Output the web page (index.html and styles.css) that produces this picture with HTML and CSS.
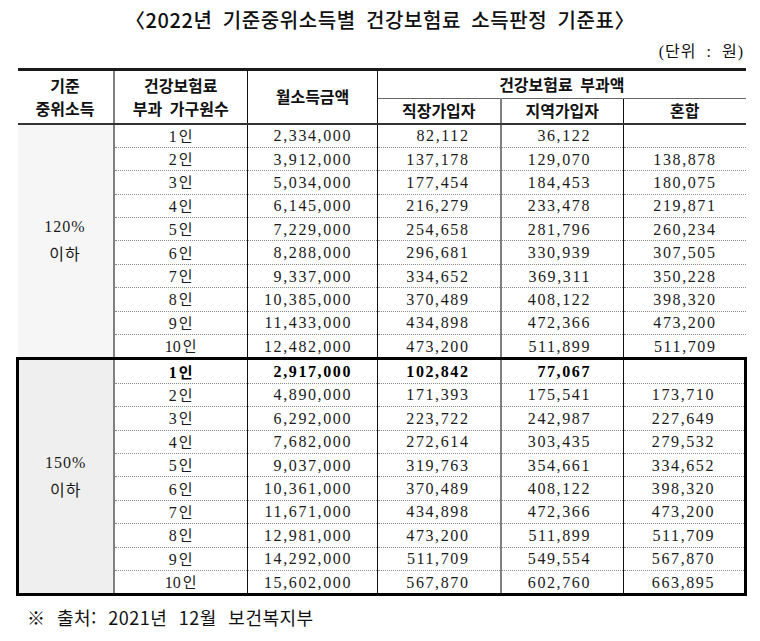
FILE: index.html
```html
<!DOCTYPE html>
<html lang="ko">
<head>
<meta charset="utf-8">
<title>2022년 기준중위소득별 건강보험료 소득판정 기준표</title>
<link rel="stylesheet" href="styles.css">
</head>
<body>
<div class="page">
  <h1 class="title">〈2022년 기준중위소득별 건강보험료 소득판정 기준표〉</h1>
  <div class="unit">(단위 : 원)</div>
  <table class="grid">
    <colgroup>
      <col class="w1"><col class="w2"><col class="w3"><col class="w4"><col class="w5"><col class="w6">
    </colgroup>
    <thead>
      <tr class="h1">
        <th rowspan="2" class="c1">기준<br>중위소득</th>
        <th rowspan="2" class="c2">건강보험료<br>부과 가구원수</th>
        <th rowspan="2" class="c3">월소득금액</th>
        <th colspan="3" class="span">건강보험료 부과액</th>
      </tr>
      <tr class="h2">
        <th class="c4">직장가입자</th>
        <th class="c5">지역가입자</th>
        <th class="c6">혼합</th>
      </tr>
    </thead>
    <tbody class="g1">
      <tr><td rowspan="10" class="c1 grp">120%<br>이하</td><td class="c2 n">1<span class="k">인</span></td><td class="c3 num">2,334,000</td><td class="c4 num">82,112</td><td class="c5 num">36,122</td><td class="c6 num"></td></tr>
      <tr><td class="c2 n">2<span class="k">인</span></td><td class="c3 num">3,912,000</td><td class="c4 num">137,178</td><td class="c5 num">129,070</td><td class="c6 num">138,878</td></tr>
      <tr><td class="c2 n">3<span class="k">인</span></td><td class="c3 num">5,034,000</td><td class="c4 num">177,454</td><td class="c5 num">184,453</td><td class="c6 num">180,075</td></tr>
      <tr><td class="c2 n">4<span class="k">인</span></td><td class="c3 num">6,145,000</td><td class="c4 num">216,279</td><td class="c5 num">233,478</td><td class="c6 num">219,871</td></tr>
      <tr><td class="c2 n">5<span class="k">인</span></td><td class="c3 num">7,229,000</td><td class="c4 num">254,658</td><td class="c5 num">281,796</td><td class="c6 num">260,234</td></tr>
      <tr><td class="c2 n">6<span class="k">인</span></td><td class="c3 num">8,288,000</td><td class="c4 num">296,681</td><td class="c5 num">330,939</td><td class="c6 num">307,505</td></tr>
      <tr><td class="c2 n">7<span class="k">인</span></td><td class="c3 num">9,337,000</td><td class="c4 num">334,652</td><td class="c5 num">369,311</td><td class="c6 num">350,228</td></tr>
      <tr><td class="c2 n">8<span class="k">인</span></td><td class="c3 num">10,385,000</td><td class="c4 num">370,489</td><td class="c5 num">408,122</td><td class="c6 num">398,320</td></tr>
      <tr><td class="c2 n">9<span class="k">인</span></td><td class="c3 num">11,433,000</td><td class="c4 num">434,898</td><td class="c5 num">472,366</td><td class="c6 num">473,200</td></tr>
      <tr class="last"><td class="c2 n">10<span class="k">인</span></td><td class="c3 num">12,482,000</td><td class="c4 num">473,200</td><td class="c5 num">511,899</td><td class="c6 num">511,709</td></tr>
    </tbody>
    <tbody class="g2">
      <tr class="bold"><td rowspan="10" class="c1 grp">150%<br>이하</td><td class="c2 n">1<span class="k">인</span></td><td class="c3 num">2,917,000</td><td class="c4 num">102,842</td><td class="c5 num">77,067</td><td class="c6 num"></td></tr>
      <tr><td class="c2 n">2<span class="k">인</span></td><td class="c3 num">4,890,000</td><td class="c4 num">171,393</td><td class="c5 num">175,541</td><td class="c6 num">173,710</td></tr>
      <tr><td class="c2 n">3<span class="k">인</span></td><td class="c3 num">6,292,000</td><td class="c4 num">223,722</td><td class="c5 num">242,987</td><td class="c6 num">227,649</td></tr>
      <tr><td class="c2 n">4<span class="k">인</span></td><td class="c3 num">7,682,000</td><td class="c4 num">272,614</td><td class="c5 num">303,435</td><td class="c6 num">279,532</td></tr>
      <tr><td class="c2 n">5<span class="k">인</span></td><td class="c3 num">9,037,000</td><td class="c4 num">319,763</td><td class="c5 num">354,661</td><td class="c6 num">334,652</td></tr>
      <tr><td class="c2 n">6<span class="k">인</span></td><td class="c3 num">10,361,000</td><td class="c4 num">370,489</td><td class="c5 num">408,122</td><td class="c6 num">398,320</td></tr>
      <tr><td class="c2 n">7<span class="k">인</span></td><td class="c3 num">11,671,000</td><td class="c4 num">434,898</td><td class="c5 num">472,366</td><td class="c6 num">473,200</td></tr>
      <tr><td class="c2 n">8<span class="k">인</span></td><td class="c3 num">12,981,000</td><td class="c4 num">473,200</td><td class="c5 num">511,899</td><td class="c6 num">511,709</td></tr>
      <tr><td class="c2 n">9<span class="k">인</span></td><td class="c3 num">14,292,000</td><td class="c4 num">511,709</td><td class="c5 num">549,554</td><td class="c6 num">567,870</td></tr>
      <tr class="last"><td class="c2 n">10<span class="k">인</span></td><td class="c3 num">15,602,000</td><td class="c4 num">567,870</td><td class="c5 num">602,760</td><td class="c6 num">663,895</td></tr>
    </tbody>
  </table>
  <p class="source">※ 출처: 2021년 12월 보건복지부</p>
</div>
</body>
</html>
```

FILE: styles.css
```css
html, body {
  margin: 0;
  padding: 0;
  background: #fff;
}

.page {
  width: 760px;
  padding-top: 6px;
  color: #111;
}

.title {
  margin: 0;
  text-align: center;
  font-family: "Noto Sans CJK KR", "Noto Sans", sans-serif;
  font-weight: 500;
  font-size: 20px;
  line-height: 28px;
  letter-spacing: 0.6px;
  word-spacing: 4px;
  color: #111;
}

.unit {
  margin: 6px 16px 0 0;
  text-align: right;
  font-family: "Liberation Serif", "Noto Sans CJK KR", serif;
  font-size: 16px;
  line-height: 24px;
  height: 28px;
  letter-spacing: 1px;
  word-spacing: 5px;
}

.grid {
  margin-left: 16px;
  width: 728px;
  table-layout: fixed;
  border-collapse: collapse;
  font-family: "Liberation Serif", "Noto Sans CJK KR", serif;
  font-size: 16px;
}

.w1 { width: 96px; }
.w2 { width: 134px; }
.w3 { width: 130px; }
.w4 { width: 123px; }
.w5 { width: 123px; }
.w6 { width: 122px; }

.grid th {
  font-family: "Noto Sans CJK KR", "Noto Sans", sans-serif;
  font-weight: 700;
  font-size: 16px;
  line-height: 23px;
  padding: 0;
  color: #111;
  border-top: 3px solid #1a1a1a;
  border-bottom: 2px solid #333;
  text-align: center;
  word-spacing: 3px;
}

.grid .h1 { height: 29px; }
.grid .h2 { height: 25px; }

.grid .h1 .span {
  border-bottom: 1px solid #666;
}

.grid .h2 th {
  border-top: 1px solid #666;
}

.grid td {
  padding: 0;
  height: 22.4px;
  line-height: 19px;
  border-bottom: 1px dotted #8a8a8a;
  letter-spacing: 1.6px;
  color: #1a1a1a;
}

.grid .c1 { border-right: 2px solid #808080; }
.grid .c2 { border-right: 1px solid #111; }
.grid .c3 { border-right: 1px solid #111; }
.grid .c4 { border-right: 2px solid #808080; }
.grid .c5 { border-right: 1px solid #111; }
.grid .h1 .span { border-right: none; }

.grid td.grp {
  text-align: center;
  line-height: 28px;
  letter-spacing: 1px;
  border-bottom: none;
  font-weight: 400;
  color: #1a1a1a;
}

.g1 td.grp { background: #f6f6f6; }
.g2 td.grp { background: #efefef; }

.grid td.n {
  text-align: center;
  letter-spacing: 0;
}

.k {
  font-family: "Noto Sans CJK KR", sans-serif;
  font-weight: 400;
  font-size: 15px;
  margin-left: 2px;
}

.grid td.num {
  text-align: right;
}

.grid td.c3 { padding-right: 25px; }
.grid td.c4 { padding-right: 30px; }
.grid td.c5 { padding-right: 32px; }
.grid td.c6 { padding-right: 29px; }

.grid .last td { border-bottom: none; }

.g2 {
  border: 3px solid #000;
}

.bold td.n,
.bold td.num {
  font-weight: 700;
  color: #000;
}

.bold .k { font-weight: 700; }

.source {
  margin: 8px 0 0 27px;
  font-family: "Noto Sans CJK KR", "Noto Sans", sans-serif;
  font-size: 18px;
  line-height: 26px;
  letter-spacing: 0.5px;
  word-spacing: 6px;
  color: #111;
}
```
